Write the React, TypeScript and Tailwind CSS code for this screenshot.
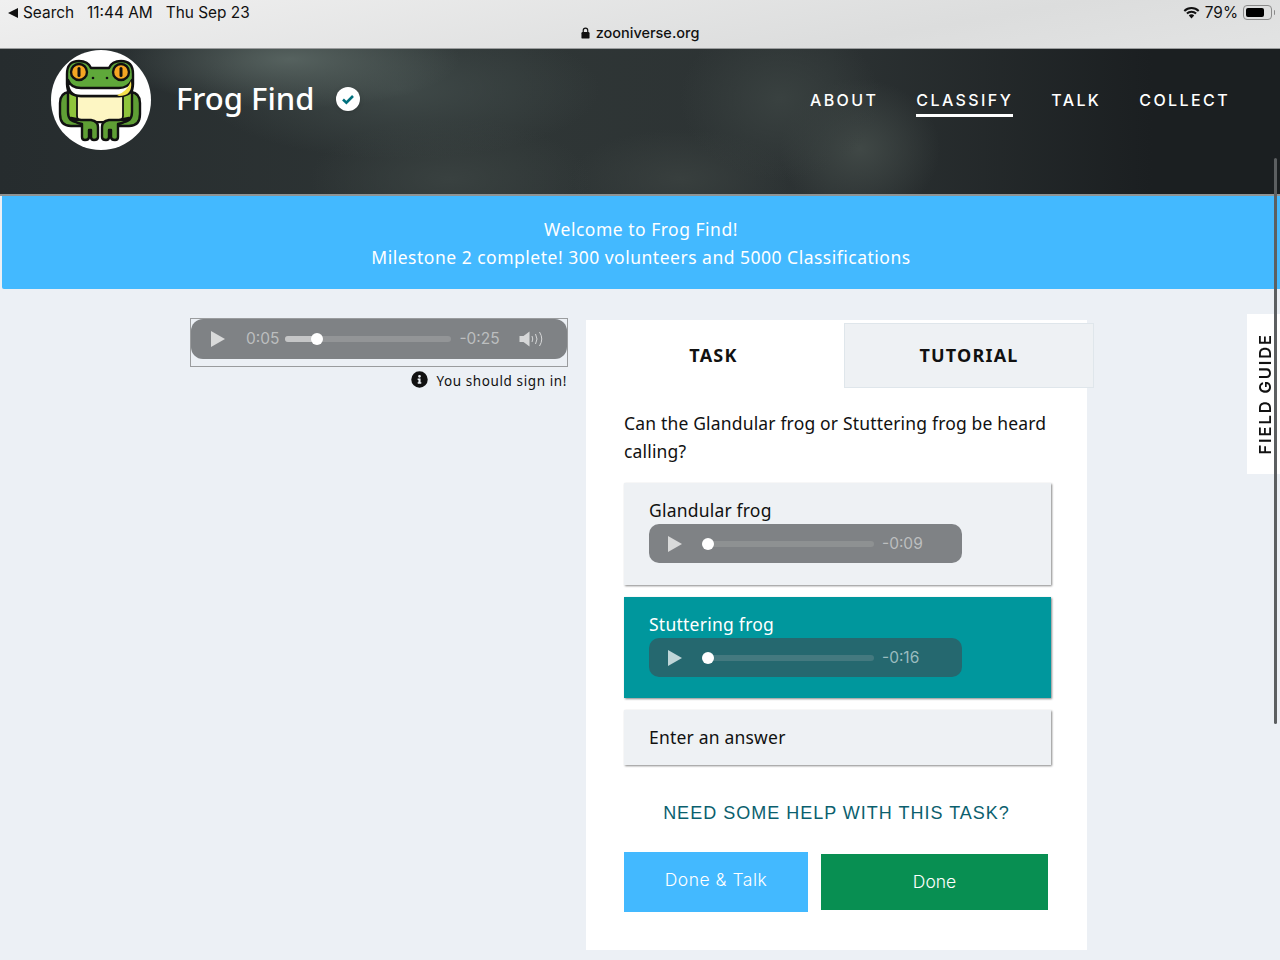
const BODY_FONT = "font-['Noto_Sans',sans-serif]";

const FrogLogo = () => (
  <svg viewBox="0 0 100 100" className="h-[100px] w-[100px]">
    <circle cx="50" cy="50" r="50" fill="#fff" />
    <g stroke="#111" strokeWidth="2.4" strokeLinejoin="round" strokeLinecap="round">
      <path d="M18 42 Q9 43 9 53 V64 Q9 76 20 76 H30 V42 Z" fill="#5f9e35" />
      <path d="M80 42 Q89 43 89 53 V64 Q89 76 78 76 H68 V42 Z" fill="#5f9e35" />
      <path d="M17 38 V62 Q17 72 27 72 H71 Q81 72 81 62 V38 Z" fill="#8fc43c" />
      <path d="M26 45 H72 V66 Q72 72 64 72 H34 Q26 72 26 66 Z" fill="#fdf6c3" strokeWidth="1.8" />
      <path d="M20 68 Q24 73 31 74 V87 Q31 90 34 90 Q38 90 38 87 V80 H40 V87 Q40 90 43 90 Q47 90 47 87 V77 Q47 71 40 70 H30 Z" fill="#5f9e35" />
      <path d="M78 68 Q74 73 67 74 V87 Q67 90 64 90 Q60 90 60 87 V80 H58 V87 Q58 90 55 90 Q51 90 51 87 V77 Q51 71 58 70 H68 Z" fill="#5f9e35" />
      <path d="M16 24 Q16 11 28 11 Q37 11 40 18 H58 Q61 11 70 11 Q82 11 82 24 V34 Q82 46 68 46 H30 Q16 46 16 34 Z" fill="#5fa83a" />
      <path d="M17 30 Q20 38 30 38 H68 Q77 38 81 30 Q82 46 68 46 H30 Q16 46 17 30 Z" fill="#fff" />
      <path d="M80 31 Q82 46 68 46 L66 45 Q76 42 80 31 Z" fill="#f4e04d" strokeWidth="0" />
      <circle cx="28" cy="22" r="8" fill="#f5a623" />
      <circle cx="70" cy="22" r="8" fill="#f5a623" />
    </g>
    <rect x="26.5" y="17" width="3" height="10" rx="1.5" fill="#111" />
    <rect x="68.5" y="17" width="3" height="10" rx="1.5" fill="#111" />
    <circle cx="42" cy="28" r="1.3" fill="#111" />
    <circle cx="56" cy="28" r="1.3" fill="#111" />
  </svg>
);

const VerifiedBadge = () => (
  <svg viewBox="0 0 24 24" className="h-6 w-6 drop-shadow">
    <circle cx="12" cy="12" r="12" fill="#fff" />
    <path d="M7 12.5l3.4 3.2L17 9" fill="none" stroke="#00707d" strokeWidth="2.6" />
  </svg>
);

const Wifi = () => (
  <svg viewBox="0 0 18 14" className="h-[13px] w-[17px]">
    <path d="M0.5 4.6 A12 12 0 0 1 17.5 4.6 L16 6.2 A10 10 0 0 0 2 6.2 Z" fill="#111" />
    <path d="M3.3 7.4 A8 8 0 0 1 14.7 7.4 L13.2 9 A6 6 0 0 0 4.8 9 Z" fill="#111" />
    <path d="M6.1 10.2 A4 4 0 0 1 11.9 10.2 L9 13.4 Z" fill="#111" />
  </svg>
);

const Battery = () => (
  <div className="flex items-center gap-[2px]">
    <div className="h-[15px] w-[29px] rounded-[4px] border border-[#8a8a8a] p-[2px]">
      <div className="h-full w-[79%] rounded-[2px] bg-black" />
    </div>
    <div className="h-[5px] w-[1px] rounded-r bg-[#8a8a8a]" />
  </div>
);

const LockGlyph = () => (
  <svg viewBox="0 0 10 13" className="h-[12px] w-[9px]">
    <path d="M2.5 6 V3.6 a2.5 2.5 0 0 1 5 0 V6" fill="none" stroke="#111" strokeWidth="1.3" />
    <rect x="0.5" y="5.5" width="9" height="7.2" rx="1.3" fill="#111" />
  </svg>
);

const PlayIcon = ({ className }: { className: string }) => (
  <svg viewBox="0 0 14 16" className={className}>
    <path d="M0 0 L14 8 L0 16 Z" fill="currentColor" />
  </svg>
);

const SpeakerIcon = () => (
  <svg viewBox="0 0 26 16" className="h-4 w-[27px] text-[#d6d7d8]">
    <path d="M0 5 H4 L10 0.5 V15.5 L4 11 H0 Z" fill="currentColor" />
    <path d="M12.5 5 Q14 8 12.5 11 M16 3 Q19 8 16 13 M20 1 Q24.5 8 20 15" fill="none" stroke="currentColor" strokeWidth="1" />
  </svg>
);

const AudioMini = ({ time, dark }: { time: string; dark?: boolean }) => (
  <div
    className={`flex h-[39px] w-[313px] items-center rounded-[10px] pl-[19px] ${dark ? 'bg-[#25686f]' : 'bg-[#7f8285]'}`}
  >
    <PlayIcon className={`h-4 w-[14px] ${dark ? 'text-[#bfd6d8]' : 'text-[#d9dada]'}`} />
    <div className={`relative ml-[20px] h-[6px] w-[172px] rounded-full ${dark ? 'bg-[#44797f]' : 'bg-[#8e9192]'}`}>
      <div className="absolute top-[-3px] left-0 h-3 w-3 rounded-full bg-white" />
    </div>
    <span className={`ml-2 font-['Inter',sans-serif] text-[15.5px] ${dark ? 'text-[#9bbcbf]' : 'text-[#bcbebf]'}`}>{time}</span>
  </div>
);

const App = () => {
  return (
    <div className={`relative h-[960px] w-full overflow-hidden bg-[#ecf0f5] ${BODY_FONT}`}>
      {/* ios status bar */}
      <div className="h-[49px] border-b border-[#9a9c9d] bg-[linear-gradient(170deg,#f0f0f0,#dcdddd_70%,#e2e3e3)] font-['Inter',sans-serif] text-[#111]">
        <div className="flex h-[25px] items-center justify-between pt-px pr-[5px] pl-2 text-[15.4px]">
          <div className="flex items-center">
            <span className="mr-[5px] h-0 w-0 border-y-[5px] border-r-[10px] border-y-transparent border-r-[#111]" />
            <span>Search</span>
            <span className="ml-[13px]">11:44 AM</span>
            <span className="ml-[13px]">Thu Sep 23</span>
          </div>
          <div className="flex items-center gap-[5px]">
            <Wifi />
            <span>79%</span>
            <Battery />
          </div>
        </div>
        <div className="flex h-[15px] items-center justify-center gap-[6px] text-[14.5px] font-medium">
          <LockGlyph />
          <span>zooniverse.org</span>
        </div>
      </div>

      {/* project header */}
      <header className="flex h-[147px] items-start border-b-2 border-[#8f9393] bg-[radial-gradient(ellipse_170px_50px_at_290px_10px,#56625f,transparent),radial-gradient(ellipse_200px_70px_at_400px_40px,#3f4948,transparent),radial-gradient(ellipse_100px_80px_at_780px_50px,#394140,transparent),radial-gradient(ellipse_80px_70px_at_860px_100px,#404846,transparent),radial-gradient(ellipse_140px_60px_at_450px_130px,#394140,transparent),radial-gradient(ellipse_110px_50px_at_680px_130px,#383f3e,transparent),linear-gradient(90deg,#262c2e,#2f3636_40%,#2c3233_65%,#1b1f21_90%)] pt-px pr-[50px] pl-[51px]">
        <FrogLogo />
        <h1 className="mt-[27px] ml-[25px] text-[31px] leading-[42px] font-medium text-white">Frog Find</h1>
        <div className="mt-[37px] ml-[22px]">
          <VerifiedBadge />
        </div>
        <nav className="ml-auto flex gap-[38px] pt-[38px] font-['Inter',sans-serif] text-[16px] font-medium tracking-[2.4px] text-white">
          <a className="h-[29px]">ABOUT</a>
          <a className="h-[29px] border-b-[3px] border-white">CLASSIFY</a>
          <a className="h-[29px]">TALK</a>
          <a className="h-[29px]">COLLECT</a>
        </nav>
      </header>

      {/* announcement */}
      <div className="ml-[2px] flex h-[93px] flex-col items-center justify-center rounded-bl-[2px] bg-[#43b9ff] text-[17.5px] leading-[28px] tracking-[0.5px] text-white">
        <p>Welcome to Frog Find!</p>
        <p>Milestone 2 complete! 300 volunteers and 5000 Classifications</p>
      </div>

      <main className="flex items-start pt-[29px] pl-[190px]">
        {/* subject */}
        <div className="w-[378px]">
          <div className="h-[49px] border border-[#9a9c9e] bg-[#ecf0f5]">
            <div className="flex h-[40px] items-center rounded-[12px] bg-[#7f8285] pl-[20px] font-['Inter',sans-serif] text-[15.5px] text-[#bcbebf]">
              <PlayIcon className="h-[16px] w-[14px] text-[#d9dada]" />
              <span className="ml-[21px]">0:05</span>
              <div className="relative ml-[6px] h-[6px] w-[166px] rounded-full bg-[#939597]">
                <div className="h-full w-[32px] rounded-full bg-[#c5c6c7]" />
                <div className="absolute top-[-3px] left-[26px] h-3 w-3 rounded-full bg-white" />
              </div>
              <span className="ml-2">-0:25</span>
              <div className="ml-[19px]">
                <SpeakerIcon />
              </div>
            </div>
          </div>
          <div className="mt-px flex items-center justify-end pr-px text-[#111]">
            <svg viewBox="0 0 512 512" className="mr-[8px] mb-[3px] h-[17px] w-[17px]">
              <path
                fill="#111"
                d="M256 8a248 248 0 1 0 0 496 248 248 0 0 0 0-496zm0 110a42 42 0 1 1 0 84 42 42 0 0 1 0-84zm56 254c0 7-5 12-12 12h-88c-7 0-12-5-12-12v-24c0-7 5-12 12-12h12v-64h-12c-7 0-12-5-12-12v-24c0-7 5-12 12-12h64c7 0 12 5 12 12v100h12c7 0 12 5 12 12v24z"
              />
            </svg>
            <span className="text-[13.5px] leading-[26px] tracking-[0.6px]">You should sign in!</span>
          </div>
        </div>

        {/* task card */}
        <section className="mt-[2px] ml-[18px] h-[630px] w-[501px] bg-white text-[#111]">
          <div className="flex h-[68px] items-stretch pt-[3px]">
            <div className="flex w-[258px] shrink-0 items-center justify-center pr-[3px] text-[18px] font-bold tracking-[1.2px]">TASK</div>
            <div className="flex w-[250px] shrink-0 items-center justify-center border border-[#dfe6eb] bg-[#eef1f4] text-[18px] font-bold tracking-[1.2px]">
              TUTORIAL
            </div>
          </div>
          <div className="px-[38px] pt-[21px]">
            <p className="text-[17.5px] leading-[28px] tracking-[0.17px]">
              Can the Glandular frog or Stuttering frog be heard calling?
            </p>
            <div className="mt-[18px] flex w-[427px] flex-col gap-[12px]">
              <div className="h-[102px] bg-[#eef1f4] px-[25px] pt-[14px] shadow-[1px_1px_2px_#888]">
                <p className="mb-px text-[17.5px] leading-[26px] tracking-[0.2px]">Glandular frog</p>
                <AudioMini time="-0:09" />
              </div>
              <div className="h-[101px] bg-[#00979d] px-[25px] pt-[14px] text-white shadow-[1px_1px_2px_#888]">
                <p className="mb-px text-[17.5px] leading-[26px] tracking-[0.25px]">Stuttering frog</p>
                <AudioMini time="-0:16" dark />
              </div>
              <div className="flex h-[55px] items-center bg-[#eef1f4] px-[25px] text-[17.5px] tracking-[0.2px] shadow-[1px_1px_2px_#888]">
                Enter an answer
              </div>
            </div>
            <p className="mt-[37px] w-[425px] text-center font-['Liberation_Sans',sans-serif] text-[18px] leading-[22px] tracking-[1px] text-[#0b5f6e]">
              NEED SOME HELP WITH THIS TASK?
            </p>
            <div className="mt-[28px] flex items-center font-['Inter',sans-serif] text-white">
              <button className="h-[60px] w-[184px] bg-[#43b9ff] pb-[4px] text-[17.5px] font-light tracking-[0.5px]">
                Done &amp; Talk
              </button>
              <button className="ml-[13px] h-[56px] w-[227px] bg-[#088f52] text-[17.5px] font-light">Done</button>
            </div>
          </div>
        </section>
      </main>

      {/* field guide tab */}
      <div className="absolute top-[314px] right-0 flex h-[160px] w-[33px] items-center justify-center bg-white pl-[4px]">
        <span className="rotate-180 font-['Inter',sans-serif] text-[16.5px] font-semibold tracking-[1.9px] text-[#111] [writing-mode:vertical-rl]">
          FIELD GUIDE
        </span>
      </div>

      {/* scrollbar */}
      <div className="absolute top-[158px] right-[3px] h-[566px] w-[3px] rounded-full bg-[#5c5f61]" />
    </div>
  );
};

export default App;
